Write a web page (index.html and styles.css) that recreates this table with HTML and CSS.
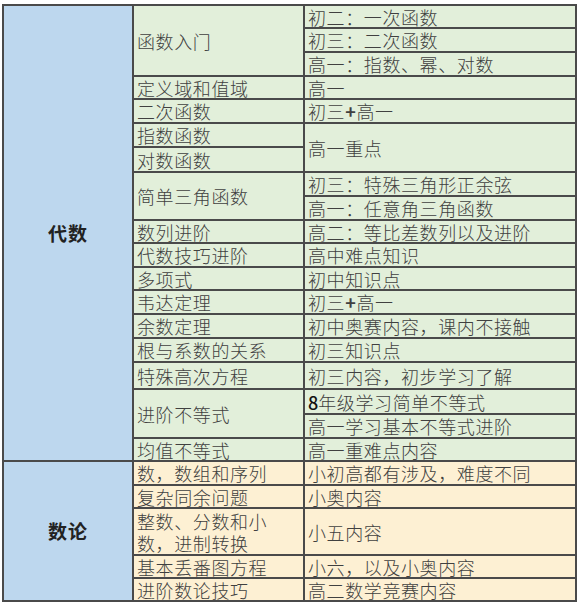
FILE: index.html
```html
<!DOCTYPE html>
<html lang="zh">
<head>
<meta charset="utf-8">
<link rel="stylesheet" href="styles.css">
</head>
<body>
<table class="sheet">
  <colgroup>
    <col class="c1"><col class="c2"><col class="c3">
  </colgroup>
  <tbody>
    <tr class="h23"><td class="cat" rowspan="19">代数</td><td class="g" rowspan="3">函数入门</td><td class="g">初二：一次函数</td></tr>
    <tr class="h24"><td class="g">初三：二次函数</td></tr>
    <tr class="h24"><td class="g">高一：指数、幂、对数</td></tr>
    <tr class="h23"><td class="g">定义域和值域</td><td class="g">高一</td></tr>
    <tr class="h24"><td class="g">二次函数</td><td class="g">初三<b class="plus">+</b>高一</td></tr>
    <tr class="h24"><td class="g">指数函数</td><td class="g" rowspan="2">高一重点</td></tr>
    <tr class="h25"><td class="g">对数函数</td></tr>
    <tr class="h24"><td class="g" rowspan="2">简单三角函数</td><td class="g">初三：特殊三角形正余弦</td></tr>
    <tr class="h24"><td class="g">高一：任意角三角函数</td></tr>
    <tr class="h23"><td class="g">数列进阶</td><td class="g">高二：等比差数列以及进阶</td></tr>
    <tr class="h24"><td class="g">代数技巧进阶</td><td class="g">高中难点知识</td></tr>
    <tr class="h23"><td class="g">多项式</td><td class="g">初中知识点</td></tr>
    <tr class="h24"><td class="g">韦达定理</td><td class="g">初三<b class="plus">+</b>高一</td></tr>
    <tr class="h24"><td class="g">余数定理</td><td class="g">初中奥赛内容，课内不接触</td></tr>
    <tr class="h24"><td class="g">根与系数的关系</td><td class="g">初三知识点</td></tr>
    <tr class="h27"><td class="g">特殊高次方程</td><td class="g">初三内容，初步学习了解</td></tr>
    <tr class="h25"><td class="g" rowspan="2">进阶不等式</td><td class="g"><b class="num">8</b>年级学习简单不等式</td></tr>
    <tr class="h24"><td class="g">高一学习基本不等式进阶</td></tr>
    <tr class="h23"><td class="g">均值不等式</td><td class="g">高一重难点内容</td></tr>
    <tr class="h24"><td class="cat" rowspan="5">数论</td><td class="o">数，数组和序列</td><td class="o">小初高都有涉及，难度不同</td></tr>
    <tr class="h23"><td class="o">复杂同余问题</td><td class="o">小奥内容</td></tr>
    <tr class="h47"><td class="o wrap">整数、分数和小<br>数，进制转换</td><td class="o">小五内容</td></tr>
    <tr class="h23"><td class="o">基本丢番图方程</td><td class="o">小六，以及小奥内容</td></tr>
    <tr class="h23"><td class="o">进阶数论技巧</td><td class="o">高二数学竞赛内容</td></tr>
  </tbody>
</table>
</body>
</html>
```

FILE: styles.css
```css
html, body {
  margin: 0;
  padding: 0;
  background: #ffffff;
}

body {
  padding: 4px 0 0 2px;
  font-family: "Noto Sans CJK SC", "Noto Sans", sans-serif;
  color: #404040;
}

.sheet {
  border-collapse: collapse;
  table-layout: fixed;
  width: 573px;
}

.c1 { width: 130px; }
.c2 { width: 171px; }
.c3 { width: 272px; }

.sheet td {
  border: 2px solid #4a4a4a;
  padding: 0 0 0 3px;
  font-size: 18px;
  font-weight: 300;
  line-height: 18px;
  letter-spacing: 0.6px;
  white-space: nowrap;
  vertical-align: middle;
}

.sheet td.cat {
  background: #bdd7ee;
  text-align: center;
  font-weight: bold;
  font-size: 19px;
  letter-spacing: 1px;
  color: #222;
  padding: 0;
}

.sheet td.g { background: #e2efda; }
.sheet td.o { background: #fdf0d3; }

.sheet td.wrap { line-height: 22px; }

.plus { font-weight: 600; }
.num { font-weight: 500; color: #111; letter-spacing: 0; }

.h23 { height: 23px; }
.h24 { height: 24px; }
.h25 { height: 25px; }
.h27 { height: 27px; }
.h47 { height: 47px; }
```
